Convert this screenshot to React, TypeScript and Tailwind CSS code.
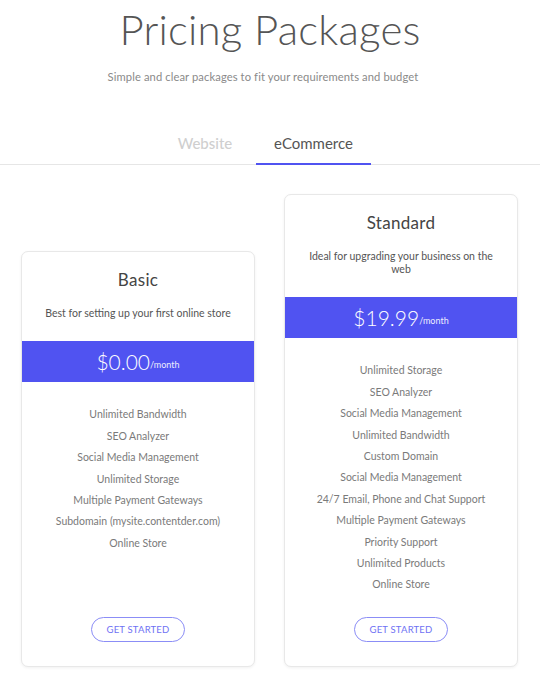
const basicFeatures = [
  "Unlimited Bandwidth",
  "SEO Analyzer",
  "Social Media Management",
  "Unlimited Storage",
  "Multiple Payment Gateways",
  "Subdomain (mysite.contentder.com)",
  "Online Store",
];

const standardFeatures = [
  "Unlimited Storage",
  "SEO Analyzer",
  "Social Media Management",
  "Unlimited Bandwidth",
  "Custom Domain",
  "Social Media Management",
  "24/7 Email, Phone and Chat Support",
  "Multiple Payment Gateways",
  "Priority Support",
  "Unlimited Products",
  "Online Store",
];

type Plan = {
  name: string;
  desc: string;
  price: string;
  features: string[];
  height: string;
};

function PlanCard({ plan }: { plan: Plan }) {
  return (
    <div
      className={`w-[234px] ${plan.height} flex flex-col bg-white border border-[#e8e8e8] rounded-[7px] shadow-[0_1px_3px_rgba(0,0,0,0.06)] overflow-hidden`}
    >
      <h3 className="pt-[16px] text-[17px] leading-[24px] text-[#444] text-center tracking-[0.3px]">
        {plan.name}
      </h3>
      <p className="mt-[15px] px-[20px] text-[10.5px] leading-[13px] text-[#555] text-center">
        {plan.desc}
      </p>
      <div className="mt-[21px] h-[41px] bg-[#5053f1] flex items-center justify-center text-white">
        <span className="text-[21px] font-light">{plan.price}</span>
        <span className="text-[9px] mt-[6px] opacity-90">/month</span>
      </div>
      <ul className="pt-[22px] flex flex-col items-center">
        {plan.features.map((f, i) => (
          <li key={i} className="text-[10.5px] leading-[21.4px] text-[#7a7a7a]">
            {f}
          </li>
        ))}
      </ul>
      <div className="mt-auto pb-[24px] flex justify-center">
        <button
          type="button"
          className="w-[94px] h-[25px] rounded-full border border-[#8b8df6] text-[#6f72f4] text-[9.5px] tracking-[0.2px]"
        >
          GET STARTED
        </button>
      </div>
    </div>
  );
}

export default function App() {
  const plans: Plan[] = [
    {
      name: "Basic",
      desc: "Best for setting up your first online store",
      price: "$0.00",
      features: basicFeatures,
      height: "h-[416px]",
    },
    {
      name: "Standard",
      desc: "Ideal for upgrading your business on the web",
      price: "$19.99",
      features: standardFeatures,
      height: "h-[473px]",
    },
  ];

  return (
    <div className="min-h-screen bg-white font-['Lato',sans-serif] overflow-hidden">
      <h1 className="pt-[1px] text-[42px] leading-[56px] font-light text-[#555] text-center tracking-[0.2px]">
        Pricing Packages
      </h1>
      <p className="mt-[12px] pr-[14px] text-[11.2px] text-[#8a8a8a] text-center tracking-[0.1px]">
        Simple and clear packages to fit your requirements and budget
      </p>

      <div className="mt-[46px] border-b border-[#e6e6e6] flex justify-center pr-[14px]">
        <button
          type="button"
          className="w-[100px] pb-[10px] text-[15px] font-medium text-[#cfcfcf] mr-px"
        >
          Website
        </button>
        <button
          type="button"
          className="w-[115px] pb-[9px] text-[15px] text-[#555] border-b-2 border-[#5053f1] -mb-px"
        >
          eCommerce
        </button>
      </div>

      <div className="mt-[29px] px-[21px] flex items-end gap-[29px]">
        {plans.map((p) => (
          <PlanCard key={p.name} plan={p} />
        ))}
      </div>
    </div>
  );
}
